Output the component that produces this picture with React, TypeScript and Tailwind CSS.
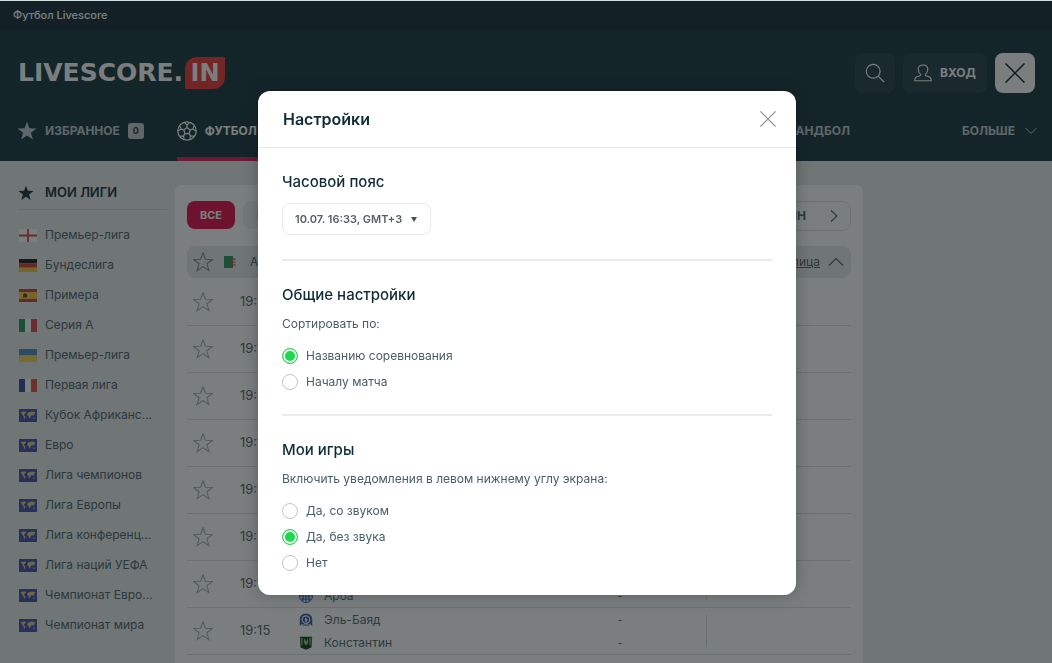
import React, { useState } from 'react';

type FlagCode = 'eng' | 'ger' | 'esp' | 'ita' | 'ukr' | 'fra' | 'world';

interface League {
  id: number;
  name: string;
  flag: FlagCode;
}

interface Match {
  id: number;
  time: string;
  home: string;
  away: string;
}

const leagues: League[] = [
  { id: 1, name: 'Премьер-лига', flag: 'eng' },
  { id: 2, name: 'Бундеслига', flag: 'ger' },
  { id: 3, name: 'Примера', flag: 'esp' },
  { id: 4, name: 'Серия А', flag: 'ita' },
  { id: 5, name: 'Премьер-лига', flag: 'ukr' },
  { id: 6, name: 'Первая лига', flag: 'fra' },
  { id: 7, name: 'Кубок Африканс...', flag: 'world' },
  { id: 8, name: 'Евро', flag: 'world' },
  { id: 9, name: 'Лига чемпионов', flag: 'world' },
  { id: 10, name: 'Лига Европы', flag: 'world' },
  { id: 11, name: 'Лига конференц...', flag: 'world' },
  { id: 12, name: 'Лига наций УЕФА', flag: 'world' },
  { id: 13, name: 'Чемпионат Евро...', flag: 'world' },
  { id: 14, name: 'Чемпионат мира', flag: 'world' },
];

const matches: Match[] = [
  { id: 1, time: '19:15', home: '', away: '' },
  { id: 2, time: '19:15', home: '', away: '' },
  { id: 3, time: '19:15', home: '', away: '' },
  { id: 4, time: '19:15', home: '', away: '' },
  { id: 5, time: '19:15', home: '', away: '' },
  { id: 6, time: '19:15', home: '', away: '' },
  { id: 7, time: '19:15', home: '', away: 'Арба' },
  { id: 8, time: '19:15', home: 'Эль-Баяд', away: 'Константин' },
];

const STAR = 'M10 0.8 L12.4 7.3 L19.4 7.5 L13.9 11.8 L15.9 18.6 L10 14.6 L4.1 18.6 L6.1 11.8 L0.6 7.5 L7.6 7.3 Z';

const StarIcon = ({ className, filled }: { className: string; filled?: boolean }) => (
  <svg viewBox="0 0 20 20" className={className} fill={filled ? 'currentColor' : 'none'} stroke="currentColor" strokeWidth={filled ? 0 : 1.1}>
    <path d={STAR} />
  </svg>
);

const CrossIcon = ({ className, strokeWidth }: { className: string; strokeWidth: number }) => (
  <svg viewBox="0 0 20 20" className={className} fill="none" stroke="currentColor" strokeWidth={strokeWidth}>
    <path d="M0.5 0.5 L19.5 19.5 M19.5 0.5 L0.5 19.5" />
  </svg>
);

const BallIcon = ({ className }: { className: string }) => (
  <svg viewBox="0 0 20 20" className={className} fill="none" stroke="currentColor" strokeWidth="1.2" strokeLinejoin="round">
    <circle cx="10" cy="10" r="9.2" />
    <path d="M10 6.6 L13.2 9 L12 12.7 H8 L6.8 9 Z" />
    <path d="M10 6.6 V4 M13.2 9 L15.7 8.1 M12 12.7 L13.5 14.9 M8 12.7 L6.5 14.9 M6.8 9 L4.3 8.1" />
    <path d="M7.2 1.4 L10 4 L12.8 1.4 M17.4 4.8 L15.7 8.1 L19 10 M17.2 15.4 L13.5 14.9 L12.9 18.5 M7.1 18.5 L6.5 14.9 L2.8 15.4 M1 10 L4.3 8.1 L2.6 4.8" />
  </svg>
);

const Flag = ({ code }: { code: FlagCode }) => (
  <svg viewBox="0 0 18 13" className="h-[13px] w-[18px] shrink-0">
    {code === 'eng' && (
      <>
        <rect width="18" height="13" fill="#fff" />
        <path d="M0 6.5 H18 M9 0 V13" stroke="#e0454c" strokeWidth="1.8" />
      </>
    )}
    {code === 'ger' && (
      <>
        <rect width="18" height="4.4" fill="#222" />
        <rect y="4.4" width="18" height="4.3" fill="#d5443a" />
        <rect y="8.7" width="18" height="4.3" fill="#f3c83c" />
      </>
    )}
    {code === 'esp' && (
      <>
        <rect width="18" height="13" fill="#d5423d" />
        <rect y="3" width="18" height="7" fill="#f5cb45" />
        <path d="M4 8.5 V5.5 L6 4 L8 5.5 V8.5 Z" fill="#7a3a1c" />
      </>
    )}
    {code === 'ita' && (
      <>
        <rect width="18" height="13" fill="#fff" />
        <rect width="6" height="13" fill="#2b9a5c" />
        <rect x="12" width="6" height="13" fill="#dc4a52" />
      </>
    )}
    {code === 'ukr' && (
      <>
        <rect width="18" height="6.5" fill="#4f8fcc" />
        <rect y="6.5" width="18" height="6.5" fill="#f2da50" />
      </>
    )}
    {code === 'fra' && (
      <>
        <rect width="18" height="13" fill="#fff" />
        <rect width="6" height="13" fill="#34509a" />
        <rect x="12" width="6" height="13" fill="#e25546" />
      </>
    )}
    {code === 'world' && (
      <>
        <rect width="18" height="13" fill="#4552ae" />
        <path d="M1.5 3.4 L3 2.8 L6.8 2.6 L7.2 3.4 L5.8 4.8 L4.6 6 L6.6 7.2 L6 8.8 L5 10.4 L4.6 7.6 L3.4 6 L2.6 4.4 Z" fill="#dccb86" />
        <path d="M8.3 4.8 L9.6 3.2 L13 2.4 L16.5 3.2 L15.6 4.6 L15 6.4 L14 6.8 L13.2 5.8 L12.4 6.2 L11.6 7.6 L10.8 9.6 L10 9 L9.6 7 L8.4 6.4 Z" fill="#dccb86" />
        <path d="M14 8.8 L15.8 8.4 L15.6 9.8 L14.2 9.8 Z" fill="#dccb86" />
      </>
    )}
  </svg>
);

const Crest = ({ id }: { id: number }) => {
  if (id === 7) {
    return (
      <svg viewBox="0 0 14 14" className="size-3.5">
        <circle cx="7" cy="7" r="6.5" fill="#fff" stroke="#3569b8" />
        <path d="M4 2 V12 M7 1 V13 M10 2 V12 M1 7 H13 M2 10 H12" stroke="#3569b8" strokeWidth="1.2" />
      </svg>
    );
  }
  if (id === 8) {
    return (
      <svg viewBox="0 0 14 14" className="size-3.5">
        <path d="M2.4 11 L0.8 13.2 V5.6 A6.2 5.2 0 0 1 13.2 5.6 V13.2 L11.6 11 L10 13 H4 Z" fill="#3c58a8" />
        <circle cx="7" cy="6.6" r="4.4" fill="#fff" />
        <circle cx="7" cy="6.6" r="3.2" fill="#3c58a8" />
        <path d="M6 4.4 L8.6 6.4 L7.4 9 L6 8.4 Z" fill="#fff" />
        <path d="M3 12 H11" stroke="#fff" />
      </svg>
    );
  }
  return (
    <svg viewBox="0 0 14 14" className="size-3.5">
      <path d="M0.8 0.8 H13.2 L12.4 11.4 L7 13.8 L1.6 11.4 Z" fill="#1a3d24" />
      <path d="M1.4 1.6 L4 2 L3.4 10 L2.2 9 Z M12.6 1.6 L10 2 L10.6 10 L11.8 9 Z" fill="#55a850" />
      <path d="M5 2 L7 5.5 L9 2 L9.2 7 L7 9.5 L4.8 7 Z" fill="#8fce74" />
    </svg>
  );
};

const Header = () => (
  <header className="bg-[#1e3a42] text-white">
    <div className="flex h-7 items-center bg-[#1c323a] px-[13px] text-[11px] font-medium">
      <a href="#football">Футбол Livescore</a>
    </div>
    <div className="flex h-[88px] items-center justify-between pr-[17px] pl-[18px]">
      <a href="#home" aria-label="LIVESCORE.IN" className="flex items-center gap-0.5 font-['DejaVu_Sans',sans-serif] text-[25px] font-bold">
        LIVESCORE.
        <span className="flex h-8 w-10 items-center justify-center rounded-tl-xl rounded-br-xl bg-[#f03a38] text-2xl">IN</span>
      </a>
      <div className="flex gap-2">
        <button type="button" aria-label="Поиск" className="flex size-10 items-center justify-center rounded-lg bg-[#2a444b]">
          <svg viewBox="0 0 20 20" className="size-5" fill="none" stroke="currentColor" strokeWidth="1.2">
            <circle cx="8.2" cy="8.2" r="6.9" />
            <path d="M13.2 13.2 L19 19" />
          </svg>
        </button>
        <button type="button" className="flex h-10 w-[84px] items-center justify-center gap-2 rounded-lg bg-[#2a444b] text-xs font-bold">
          <svg viewBox="0 0 18 18" className="size-[18px]" fill="none" stroke="currentColor" strokeWidth="1.1">
            <path d="M6.6 10.4 C4.8 9 4.2 7 4.2 5.2 C4.2 2.6 6 1 9 1 C12 1 13.8 2.6 13.8 5.2 C13.8 7 13.2 9 11.4 10.4 C11.2 11.6 12 12 13.4 12.2 C16 12.6 17.3 13.6 17.3 16.8 H0.7 C0.7 13.6 2 12.6 4.6 12.2 C6 12 6.8 11.6 6.6 10.4 Z" />
          </svg>
          ВХОД
        </button>
        <button type="button" aria-label="Закрыть меню" className="flex size-10 items-center justify-center rounded-lg bg-white text-[#0b2630]">
          <CrossIcon className="size-5" strokeWidth={1.5} />
        </button>
      </div>
    </div>
    <nav className="flex h-11 justify-between pr-[15px] pl-[17px] text-xs font-bold text-[#c3cbce]">
      <div className="flex gap-[33px]">
        <a href="#favorites" className="flex items-center pb-4">
          <StarIcon className="mr-2 size-5" filled />
          ИЗБРАННОЕ
          <span className="ml-2 flex size-4 items-center justify-center rounded-[3px] bg-[#c8cdcf] text-[9px] text-[#1e3a42]">0</span>
        </a>
        <a href="#football" className="flex w-24 items-center border-b-4 border-[#e01f56] pb-3 text-white">
          <BallIcon className="mr-2 size-5 shrink-0" />
          ФУТБОЛ
        </a>
      </div>
      <div className="flex">
        <a href="#handball" className="mr-28 flex items-center pb-4">ГАНДБОЛ</a>
        <button type="button" className="flex items-center gap-2.5 pb-4">
          БОЛЬШЕ
          <svg viewBox="0 0 12 8" className="h-2 w-3" fill="none" stroke="currentColor">
            <path d="M0.5 1 L6 6.5 L11.5 1" />
          </svg>
        </button>
      </div>
    </nav>
  </header>
);

const Sidebar = () => (
  <aside className="w-[149px] shrink-0 pt-[15px]">
    <h2 className="flex h-[34px] items-center border-b border-[#d4d8d9] text-[13px] font-semibold text-[#1b3640]">
      <StarIcon className="mr-[11px] size-4" filled />
      МОИ ЛИГИ
    </h2>
    <ul className="pt-2.5">
      {leagues.map(league => (
        <li key={league.id}>
          <a href={`#league-${league.id}`} className="flex h-[30px] items-center gap-2 pl-px text-xs whitespace-nowrap text-[#53676f]">
            <Flag code={league.flag} />
            {league.name}
          </a>
        </li>
      ))}
    </ul>
  </aside>
);

const MatchRow = ({ match }: { match: Match }) => (
  <div className="flex h-[47px] items-center border-b border-[#dfe2e3] text-xs text-[#5c6a70]">
    <button type="button" aria-label="Добавить в избранное" className="w-8 shrink-0 pl-1.5 text-[#aab2b5]">
      <StarIcon className="size-5" />
    </button>
    <span className="w-20 shrink-0 pl-[21px] text-[13px]">{match.time}</span>
    <div className="flex-1">
      {[match.home, match.away].map((team, index) => (
        <div key={index} className="flex h-[23px] items-center">
          {team && <Crest id={index === 1 && match.id === 8 ? 9 : match.id} />}
          <span className="ml-[11px] flex-1">{team}</span>
          {team && <span className="w-[88px] text-[9px] font-semibold">-</span>}
        </div>
      ))}
    </div>
    <div className="h-8 w-[145px] border-l border-[#d8dcdd]" />
  </div>
);

const MatchList = () => (
  <main className="mt-6 min-w-0 flex-1 rounded-t-md bg-white p-3 pt-4">
    <div className="flex h-[30px] justify-between text-[11px] font-bold">
      <div className="flex gap-2">
        <button type="button" className="h-7 w-12 rounded-lg bg-[#e3124f] text-white">ВСЕ</button>
        <button type="button" className="h-7 w-[52px] rounded-lg bg-[#eef0f1] text-[#5c6a70]">LIVE</button>
      </div>
      <div className="flex w-40 items-center justify-end gap-6 rounded-lg border border-[#e3e6e7] pr-3 text-xs text-[#5c6a70]">
        <span>10/07 ПН</span>
        <button type="button" aria-label="Следующий день">
          <svg viewBox="0 0 8 12" className="h-3 w-2" fill="none" stroke="currentColor" strokeWidth="1.2">
            <path d="M1 0.5 L7 6 L1 11.5" />
          </svg>
        </button>
      </div>
    </div>
    <div className="mt-[15px] mb-px flex h-8 items-center rounded-lg bg-[#e9ebec] pr-[7px] pl-1.5 text-xs text-[#53676f]">
      <button type="button" aria-label="Добавить лигу" className="text-[#84908f]">
        <StarIcon className="size-5" />
      </button>
      <svg viewBox="0 0 12 12" className="ml-[11px] size-3">
        <rect width="9" height="12" fill="#2b9a5c" />
        <path d="M11.5 3.5 A3 3 0 1 0 11.5 8.5 M9 6 H11.5" fill="none" stroke="#dc4a52" strokeWidth="1.2" />
      </svg>
      <span className="ml-3.5 flex-1">АЛЖИР: Первый дивизион</span>
      <a href="#table" className="mr-2 underline">Таблица</a>
      <svg viewBox="0 0 16 10" className="h-2.5 w-4" fill="none" stroke="currentColor" strokeWidth="1.2">
        <path d="M1 8.5 L8 1.5 L15 8.5" />
      </svg>
    </div>
    {matches.map(match => (
      <MatchRow key={match.id} match={match} />
    ))}
  </main>
);

interface RadioListProps {
  name: string;
  options: string[];
  value: string;
  onChange: (value: string) => void;
}

const RadioList: React.FC<RadioListProps> = ({ name, options, value, onChange }) => (
  <div className="mt-[9px]">
    {options.map(option => (
      <label key={option} className="flex h-[26px] items-center gap-2">
        <input
          type="radio"
          name={name}
          value={option}
          checked={value === option}
          onChange={() => onChange(option)}
          className="size-4 shrink-0 appearance-none rounded-full border border-[#bfc5c8] bg-white checked:border-[#38cf60] checked:bg-[#1fd84f] checked:shadow-[inset_0_0_0_2px_#e8fbee]"
        />
        {option}
      </label>
    ))}
  </div>
);

const SettingsDialog = () => {
  const [timezone, setTimezone] = useState('gmt3');
  const [sortBy, setSortBy] = useState('Названию соревнования');
  const [notify, setNotify] = useState('Да, без звука');

  const headingClass = 'text-[15px] leading-6 font-medium text-[#0f2d37]';
  const sectionClass = 'pt-[22px]';

  return (
    <div className="fixed inset-0 top-px flex items-start justify-center bg-[#0d1416]/55 pt-[90px] pl-0.5">
      <div role="dialog" aria-labelledby="settings-title" className="w-full max-w-[538px] rounded-xl bg-white text-xs text-[#4a5d65] shadow-[0_0_16px_rgba(0,0,0,0.25)]">
        <div className="flex h-[57px] items-center justify-between border-b border-[#e6e9ea] pr-5 pl-[25px]">
          <h1 id="settings-title" className="text-base font-semibold text-[#0f2d37]">Настройки</h1>
          <button type="button" aria-label="Закрыть" className="text-[#858d90]">
            <CrossIcon className="size-4" strokeWidth={1.4} />
          </button>
        </div>
        <div className="px-6 pb-[19px]">
          <section className={`${sectionClass} border-b-2 border-[#eaecec] pb-6`}>
            <h2 className={headingClass}>
              <label htmlFor="timezone">Часовой пояс</label>
            </h2>
            <div className="relative mt-[9px] w-[149px]">
              <select
                id="timezone"
                value={timezone}
                onChange={e => setTimezone(e.target.value)}
                className="h-8 w-full appearance-none rounded-lg border border-[#e8eaeb] bg-white pl-3 text-[11px] font-semibold text-[#555e61]"
              >
                <option value="gmt3">10.07. 16:33, GMT+3</option>
                <option value="gmt4">10.07. 17:33, GMT+4</option>
              </select>
              <svg viewBox="0 0 6 5" className="pointer-events-none absolute top-3.5 right-3.5 h-[5px] w-1.5" fill="#454f53">
                <path d="M0 0 H6 L3 5 Z" />
              </svg>
            </div>
          </section>
          <section className={`${sectionClass} border-b-2 border-[#eaecec] pb-[19px]`}>
            <h2 className={headingClass}>Общие настройки</h2>
            <p className="mt-[7px] leading-5">Сортировать по:</p>
            <RadioList name="sort" options={['Названию соревнования', 'Началу матча']} value={sortBy} onChange={setSortBy} />
          </section>
          <section className={sectionClass}>
            <h2 className={headingClass}>Мои игры</h2>
            <p className="mt-[7px] leading-5">Включить уведомления в левом нижнему углу экрана:</p>
            <RadioList name="notify" options={['Да, со звуком', 'Да, без звука', 'Нет']} value={notify} onChange={setNotify} />
          </section>
        </div>
      </div>
    </div>
  );
};

export default function App() {
  return (
    <div className="h-screen overflow-hidden border-t border-[#cfe0e0] bg-[#e8eaea] font-['Inter',sans-serif]">
      <Header />
      <div className="flex gap-2 pr-[189px] pl-[18px]">
        <Sidebar />
        <MatchList />
      </div>
      <SettingsDialog />
    </div>
  );
}
